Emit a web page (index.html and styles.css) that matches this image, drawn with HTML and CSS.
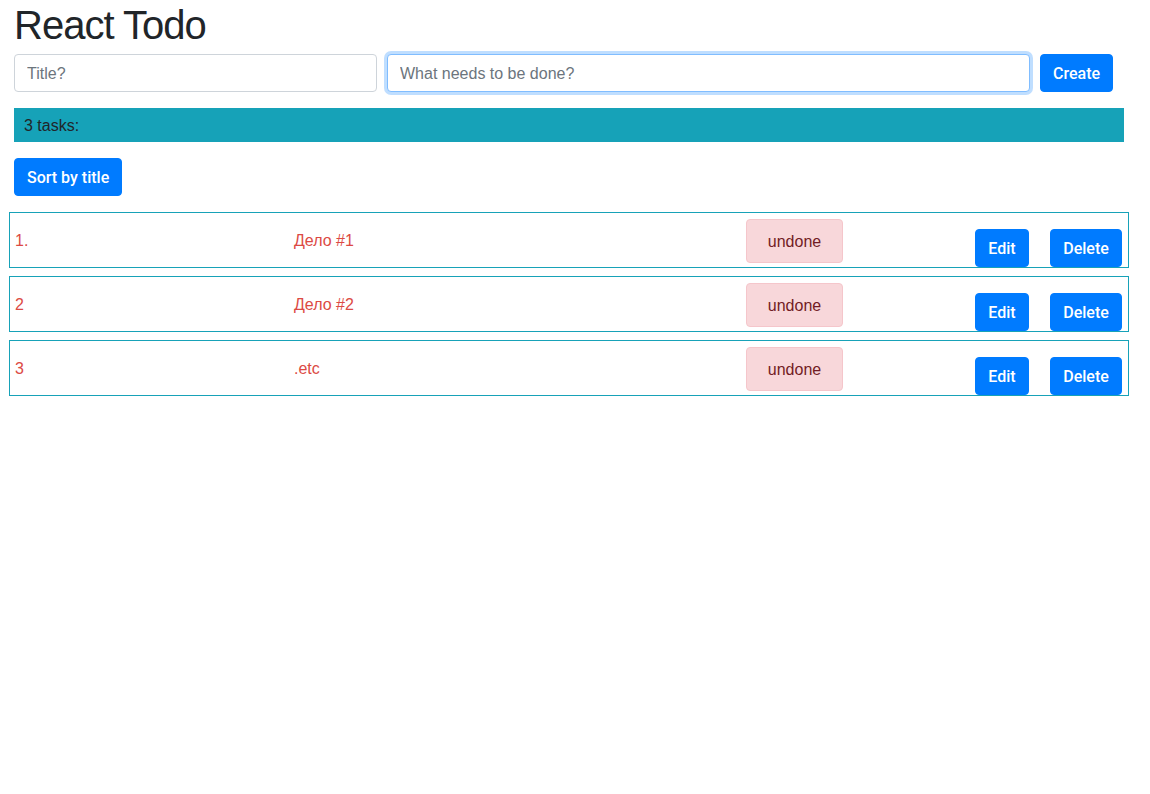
FILE: index.html
```html
<!DOCTYPE html>
<html>
<head>
<meta charset="utf-8">
<title>React Todo</title>
<link rel="stylesheet" href="styles.css">
</head>
<body>
<div class="app">
  <h1 class="title">React Todo</h1>
  <div class="form">
    <input class="field field-title" type="text" placeholder="Title?">
    <input class="field field-todo focused" type="text" placeholder="What needs to be done?">
    <button class="btn">Create</button>
  </div>
  <div class="count">3 tasks:</div>
  <button class="btn sort">Sort by title</button>
  <div class="list">
    <div class="item">
      <span class="num">1.</span>
      <span class="name">Дело #1</span>
      <div class="status"><span class="badge">undone</span></div>
      <button class="btn edit">Edit</button>
      <button class="btn del">Delete</button>
    </div>
    <div class="item">
      <span class="num">2</span>
      <span class="name">Дело #2</span>
      <div class="status"><span class="badge">undone</span></div>
      <button class="btn edit">Edit</button>
      <button class="btn del">Delete</button>
    </div>
    <div class="item">
      <span class="num">3</span>
      <span class="name">.etc</span>
      <div class="status"><span class="badge">undone</span></div>
      <button class="btn edit">Edit</button>
      <button class="btn del">Delete</button>
    </div>
  </div>
</div>
</body>
</html>
```

FILE: styles.css
```css
* { box-sizing: border-box; }
body {
  margin: 0;
  font-family: "Liberation Sans", Arial, sans-serif;
  font-size: 16px;
  line-height: 24px;
  color: #212529;
  background: #fff;
}
.app {
  padding: 0 26px 0 14px;
}
.title {
  margin: 0 0 6px;
  font-size: 40px;
  font-weight: 500;
  line-height: 48px;
  letter-spacing: -1px;
  padding-top: 1px;
  height: 48px;
}
.form {
  display: flex;
  align-items: center;
  gap: 10px;
}
.field {
  height: 38px;
  padding: 7px 12px 5px;
  font: inherit;
  color: #495057;
  border: 1px solid #ced4da;
  border-radius: 4px;
  outline: none;
}
.field::placeholder { color: #6c757d; }
.field-title { width: 363px; }
.field-todo { width: 643px; }
.focused {
  border-color: #80bdff;
  box-shadow: 0 0 0 3px rgba(0, 123, 255, 0.25);
}
.btn {
  height: 38px;
  padding: 7px 12px 5px;
  font-family: Roboto, "Liberation Sans", sans-serif;
  font-size: 16px;
  font-weight: 500;
  line-height: 24px;
  color: #fff;
  background: #007bff;
  border: 1px solid #007bff;
  border-radius: 4px;
}
.count {
  margin-top: 16px;
  height: 34px;
  padding: 6px 10px 4px;
  background: #16a2b8;
  color: #212529;
}
.sort {
  margin-top: 16px;
  display: block;
}
.list {
  margin: 16px -5px 0;
  display: flex;
  flex-direction: column;
  gap: 8px;
}
.item {
  display: grid;
  grid-template-columns: 279px 452px 229px 75px auto;
  height: 56px;
  padding: 0 6px 0 5px;
  border: 1px solid #17a2b8;
  color: #dc4a44;
}
.num, .name { align-self: center; padding-top: 2px; }
.status { padding-top: 6px; }
.badge {
  display: inline-block;
  width: 97px;
  height: 44px;
  padding: 10px 0 8px;
  text-align: center;
  background: #f8d7da;
  border: 1px solid #f5c6cb;
  border-radius: 4px;
  color: #721c24;
}
.edit, .del { align-self: end; padding-left: 0; padding-right: 0; text-align: center; }
.edit { width: 54px; }
.del { width: 72px; }
```
